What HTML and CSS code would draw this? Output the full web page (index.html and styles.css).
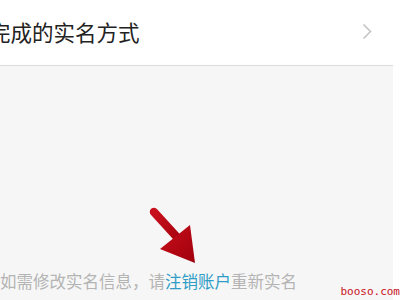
FILE: index.html
```html
<html lang="zh">
<head>
  <meta charset="UTF-8">
  <meta name="viewport" content="width=device-width, initial-scale=1.0">
  <title>实名认证</title>
  <link rel="stylesheet" href="styles.css">
</head>
<body>
  <div class="page">
    <div class="row">
      <span class="row-title">完成的实名方式</span>
      <svg class="chevron" width="11" height="17" viewBox="0 0 11 17">
        <path d="M1.5 1.5 L8.5 8.5 L1.5 15.5" fill="none" stroke="#c4c4c4" stroke-width="1.6"/>
      </svg>
    </div>
    <div class="content">
      <p class="tip">如需修改实名信息，请<span class="link">注销账户</span>重新实名</p>
    </div>
  </div>

  <svg class="arrow" width="60" height="70" viewBox="0 0 60 70">
    <defs>
      <linearGradient id="red" x1="0" y1="0" x2="1" y2="1">
        <stop offset="0" stop-color="#c8101c"/>
        <stop offset="1" stop-color="#a0000c"/>
      </linearGradient>
    </defs>
    <path d="M9 9 L40 43" stroke="url(#red)" stroke-width="8.5" stroke-linecap="round"/>
    <path d="M15 46 L50 60 L45 22 Z" fill="url(#red)"/>
  </svg>

  <div class="watermark">booso.com</div>
</body>
</html>
```

FILE: styles.css
```css
body {
  margin: 0;
  background: #fff;
  font-family: "Noto Sans CJK SC", "Noto Sans", sans-serif;
  overflow: hidden;
}
.page {
  width: 393px;
  height: 300px;
  display: flex;
  flex-direction: column;
  background: #f6f6f6;
}
.row {
  height: 65px;
  background: #fff;
  border-bottom: 1px solid #dcdcdc;
  display: flex;
  align-items: center;
  justify-content: space-between;
  padding-right: 20px;
}
.row-title {
  margin-left: -11px;
  font-size: 21.5px;
  color: #222;
  margin-top: -2px;
}
.chevron {
  margin-top: -3px;
}
.content {
  flex: 1;
  display: flex;
  align-items: flex-end;
}
.tip {
  margin: 0 0 7px 0;
  font-size: 16.5px;
  color: #b4b4b4;
  white-space: nowrap;
}
.link {
  color: #2f9dc6;
}
.arrow {
  position: absolute;
  left: 145px;
  top: 203px;
}
.watermark {
  position: absolute;
  right: 0;
  top: 286px;
  font-family: "DejaVu Sans Mono", monospace;
  font-size: 11px;
  color: #c8101c;
  line-height: 12px;
}
```
